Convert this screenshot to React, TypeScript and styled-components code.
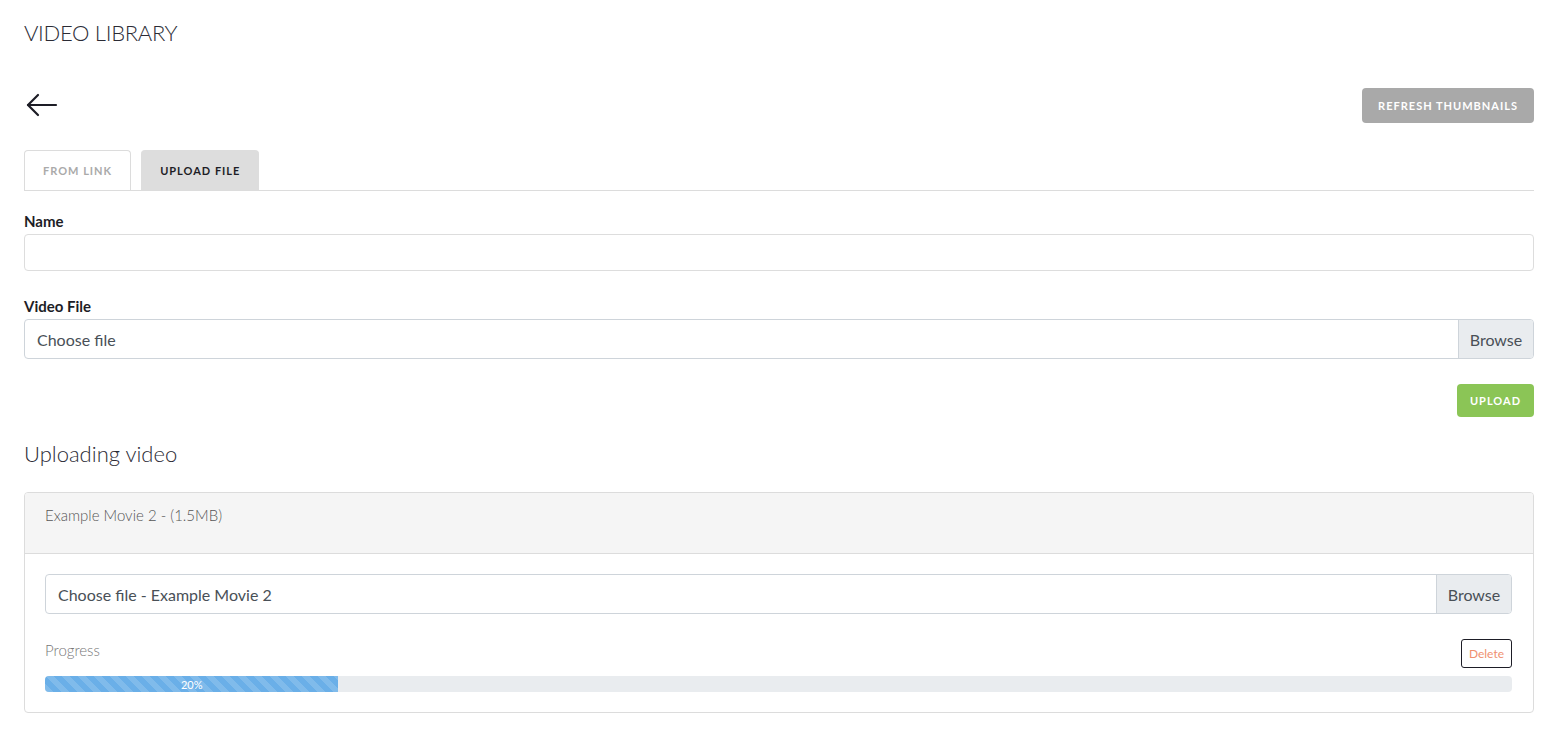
import styled, { createGlobalStyle } from 'styled-components'

const GlobalStyle = createGlobalStyle`
  body {
    margin: 0;
    background: #fff;
    font-family: "Source Sans Pro", Lato, "Open Sans", sans-serif;
    color: #222;
  }
  * { box-sizing: border-box; }
`

const Page = styled.div`
  padding: 18px 32px 24px 24px;
  display: flex;
  flex-direction: column;
`

const Title = styled.h1`
  margin: 0;
  font-size: 22px;
  font-weight: 300;
  color: #2b2b35;
  letter-spacing: -0.3px;
  line-height: 30px;
`

const Toolbar = styled.div`
  margin-top: 39px;
  display: flex;
  justify-content: space-between;
  align-items: center;
  height: 36px;
`

const BackButton = styled.button`
  border: 0;
  background: none;
  padding: 0;
  margin-left: 2px;
  display: flex;
  cursor: pointer;
`

const GreyButton = styled.button<{ $bg: string }>`
  border: 0;
  border-radius: 4px;
  background: ${p => p.$bg};
  color: #fff;
  font-family: inherit;
  font-weight: 700;
  font-size: 11px;
  letter-spacing: 1px;
  text-transform: uppercase;
  padding: 0 16px;
  height: 35px;
`

const Tabs = styled.div`
  margin-top: 27px;
  display: flex;
  gap: 10px;
  border-bottom: 1px solid #dcdcdc;
`

const Tab = styled.div<{ $active?: boolean }>`
  height: 40px;
  padding: 0 18px;
  display: flex;
  align-items: center;
  border: 1px solid ${p => (p.$active ? '#dddddd' : '#dcdcdc')};
  border-bottom: 0;
  border-radius: 4px 4px 0 0;
  background: ${p => (p.$active ? '#dddddd' : '#fff')};
  color: ${p => (p.$active ? '#1d1d26' : '#aaaaaa')};
  font-size: 11px;
  font-weight: 700;
  letter-spacing: 1px;
  text-transform: uppercase;
`

const Field = styled.div<{ $top: number }>`
  margin-top: ${p => p.$top}px;
  display: flex;
  flex-direction: column;
`

const Label = styled.label`
  font-size: 15px;
  font-weight: 700;
  color: #1d1d26;
  line-height: 20px;
  margin-bottom: 3px;
`

const TextInput = styled.input`
  height: 37px;
  border: 1px solid #dddddd;
  border-radius: 4px;
  font-family: inherit;
  font-size: 15px;
  padding: 0 12px;
  outline: none;
`

const FileInput = styled.div`
  height: 40px;
  display: flex;
  border: 1px solid #ced4da;
  border-radius: 4px;
  overflow: hidden;
`

const FileText = styled.div`
  flex: 1;
  display: flex;
  align-items: center;
  padding: 0 12px;
  font-size: 16px;
  color: #495057;
`

const Browse = styled.div`
  width: 75px;
  display: flex;
  align-items: center;
  justify-content: center;
  background: #e9ecef;
  border-left: 1px solid #ced4da;
  font-size: 16px;
  color: #495057;
`

const Actions = styled.div`
  margin-top: 25px;
  display: flex;
  justify-content: flex-end;
`

const UploadButton = styled(GreyButton)`
  height: 33px;
  padding: 0 13px;
`

const SubTitle = styled.h2`
  margin: 23px 0 0;
  font-size: 22px;
  font-weight: 300;
  color: #2b2b35;
  line-height: 28px;
`

const Card = styled.div`
  margin-top: 24px;
  border: 1px solid #dcdcdc;
  border-radius: 4px;
  overflow: hidden;
`

const CardHeader = styled.div`
  height: 61px;
  background: #f5f5f5;
  border-bottom: 1px solid #dcdcdc;
  padding: 13px 20px;
  font-size: 15px;
  font-weight: 300;
  color: #555;
`

const CardBody = styled.div`
  padding: 20px 21px 20px 20px;
  display: flex;
  flex-direction: column;
`

const ProgressRow = styled.div`
  margin-top: 25px;
  display: flex;
  justify-content: space-between;
  align-items: flex-start;
`

const ProgressLabel = styled.div`
  font-size: 15px;
  font-weight: 300;
  color: #777;
  line-height: 22px;
`

const DeleteButton = styled.button`
  height: 29px;
  padding: 0 7px;
  border: 1px solid #1d1d26;
  border-radius: 3px;
  background: #fff;
  color: #f0906f;
  font-family: inherit;
  font-size: 12px;
`

const Bar = styled.div`
  margin-top: 8px;
  height: 16px;
  border-radius: 4px;
  background: #e9ecef;
  overflow: hidden;
  display: flex;
`

const BarFill = styled.div`
  height: 100%;
  background-color: #6aafe8;
  background-image: linear-gradient(
    45deg,
    rgba(255, 255, 255, 0.15) 25%,
    transparent 25%,
    transparent 50%,
    rgba(255, 255, 255, 0.15) 50%,
    rgba(255, 255, 255, 0.15) 75%,
    transparent 75%,
    transparent
  );
  background-size: 16px 16px;
  color: #fff;
  font-size: 11px;
  display: flex;
  align-items: center;
  justify-content: center;
`

const ArrowIcon = () => (
  <svg width="32" height="24" viewBox="0 0 32 24" fill="none" stroke="#1d1d26" strokeWidth="2.2" strokeLinecap="round" strokeLinejoin="round">
    <path d="M30 12H2" />
    <path d="M12 2L2 12l10 10" />
  </svg>
)

const App = () => {
  const progress = 20
  return (
    <Page>
      <GlobalStyle />
      <Title>VIDEO LIBRARY</Title>
      <Toolbar>
        <BackButton aria-label="Back">
          <ArrowIcon />
        </BackButton>
        <GreyButton $bg="#a9a9a9">Refresh thumbnails</GreyButton>
      </Toolbar>
      <Tabs>
        <Tab>From link</Tab>
        <Tab $active>Upload file</Tab>
      </Tabs>
      <Field $top={20}>
        <Label>Name</Label>
        <TextInput />
      </Field>
      <Field $top={25}>
        <Label>Video File</Label>
        <FileInput>
          <FileText>Choose file</FileText>
          <Browse>Browse</Browse>
        </FileInput>
      </Field>
      <Actions>
        <UploadButton $bg="#8bc556">Upload</UploadButton>
      </Actions>
      <SubTitle>Uploading video</SubTitle>
      <Card>
        <CardHeader>Example Movie 2 - (1.5MB)</CardHeader>
        <CardBody>
          <FileInput>
            <FileText>Choose file - Example Movie 2</FileText>
            <Browse>Browse</Browse>
          </FileInput>
          <ProgressRow>
            <ProgressLabel>Progress</ProgressLabel>
            <DeleteButton>Delete</DeleteButton>
          </ProgressRow>
          <Bar>
            <BarFill style={{ width: `${progress}%` }}>{progress}%</BarFill>
          </Bar>
        </CardBody>
      </Card>
    </Page>
  )
}

export default App
